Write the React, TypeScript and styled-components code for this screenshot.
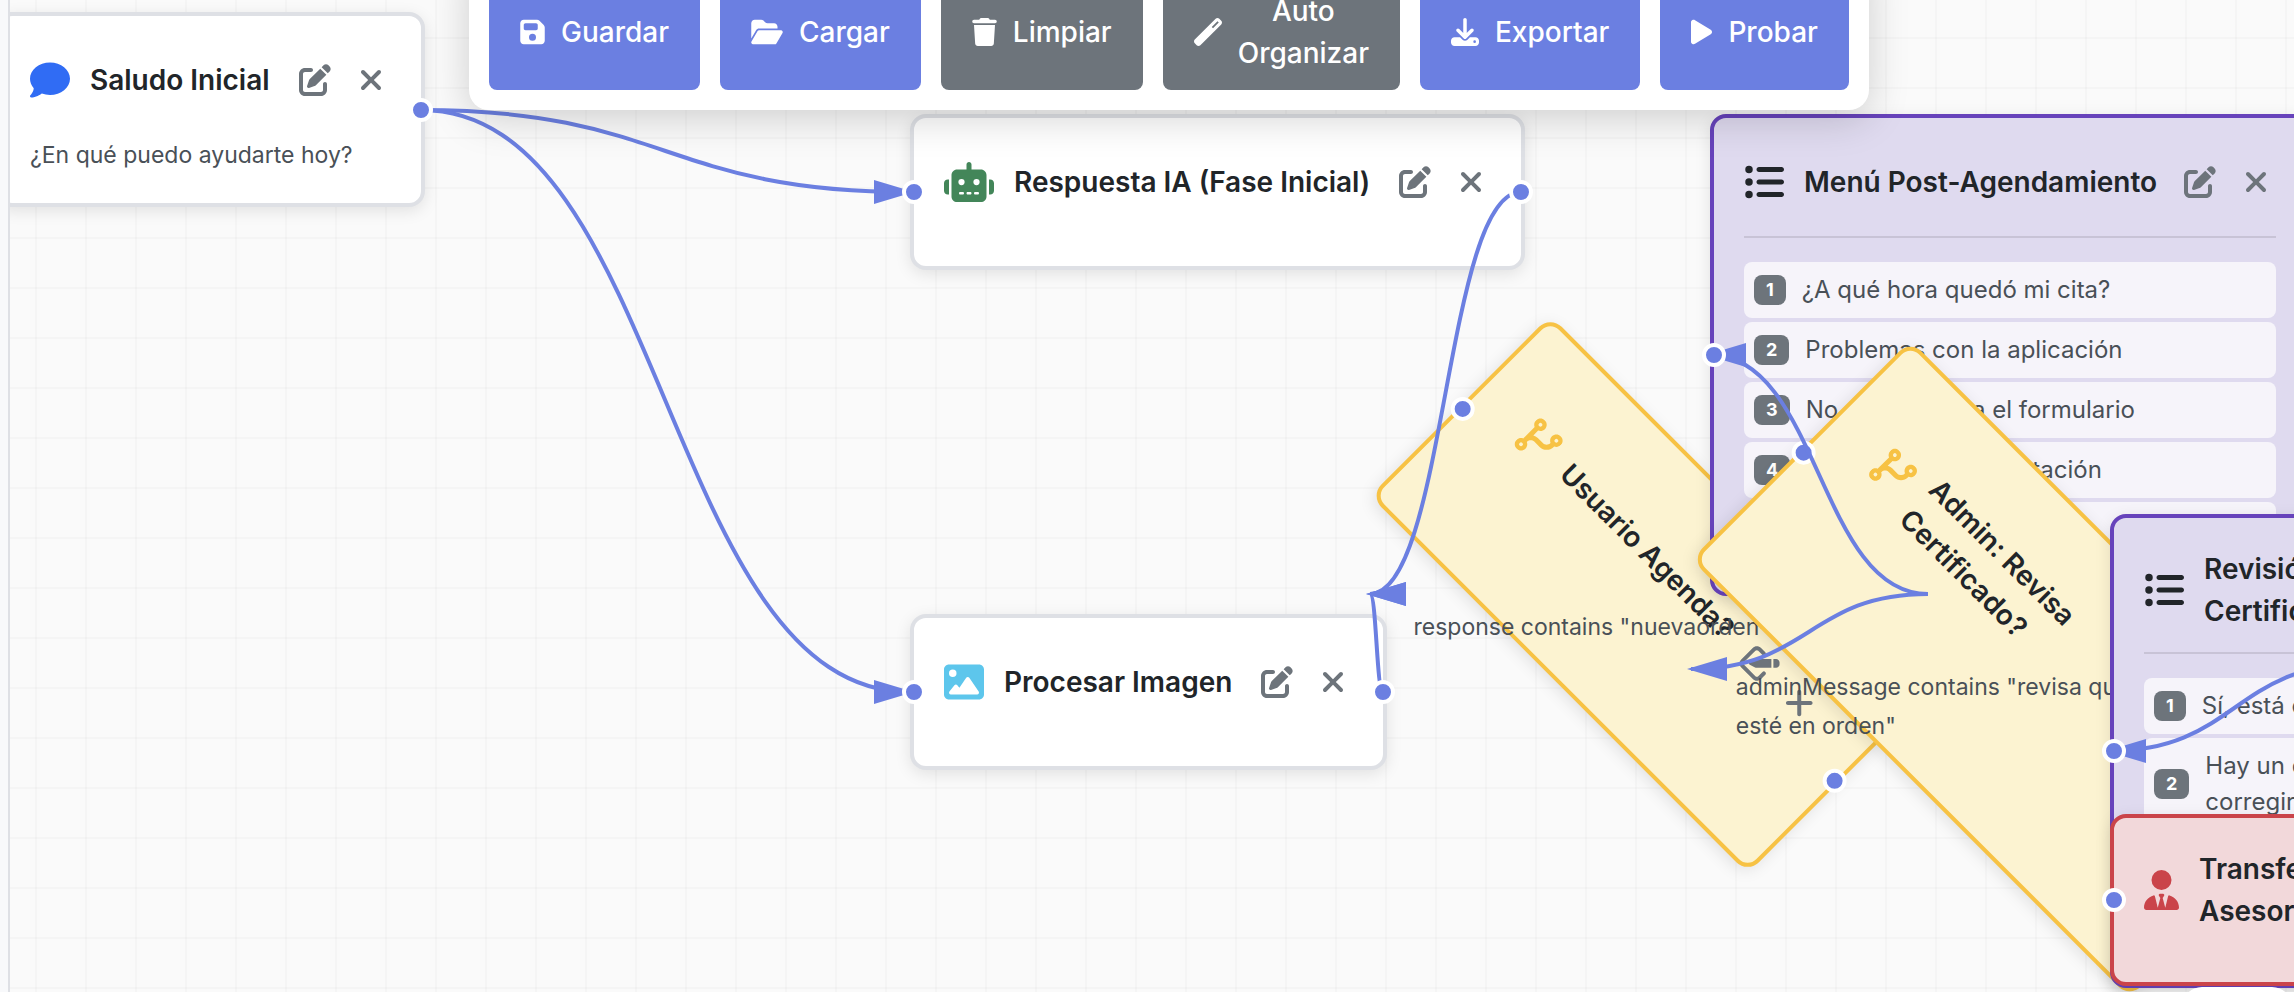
import React from "react";
import styled, { createGlobalStyle, css } from "styled-components";
import type { IconType } from "react-icons";
import {
  FaCodeBranch,
  FaComment,
  FaDownload,
  FaFloppyDisk,
  FaFolderOpen,
  FaImage,
  FaListUl,
  FaPenToSquare,
  FaPlay,
  FaRobot,
  FaTrash,
  FaUserTie,
  FaWandMagic,
  FaXmark,
} from "react-icons/fa6";

const color = {
  accent: "#6b7fe1",
  gray: "#6d747b",
  ink: "#212529",
  soft: "#495057",
  line: "#dee0e5",
};

type Kind = "plain" | "menu" | "condition" | "transfer";

const palette: Record<Kind, { border: string; fill: string }> = {
  plain: { border: color.line, fill: "#ffffff" },
  menu: { border: "#6743bb", fill: "#dfdaef" },
  condition: { border: "#f7c244", fill: "#fcf3d1" },
  transfer: { border: "#ca444a", fill: "#f2d8da" },
};

const GlobalStyle = createGlobalStyle`
  *, *::before, *::after { box-sizing: border-box; }
  body {
    margin: 0;
    overflow: hidden;
    font-family: Inter, "Liberation Sans", sans-serif;
    color: ${color.ink};
    background: #fafafa;
  }
  button { font: inherit; cursor: pointer; }
`;

const Page = styled.div`
  display: flex;
  height: 100vh;
`;

const SideEdge = styled.aside`
  flex: 0 0 10px;
  background: #f8f9fb;
  border-right: 2px solid ${color.line};
`;

const Canvas = styled.main`
  position: relative;
  flex: 1;
  min-width: 0;
  overflow: hidden;
  background-color: #fafafa;
  background-image: linear-gradient(rgba(0, 0, 0, 0.02) 2px, transparent 2px),
    linear-gradient(90deg, rgba(0, 0, 0, 0.02) 2px, transparent 2px);
  background-size: 50px 50px;
  background-position: 25px 37px;
`;

const Toolbar = styled.div`
  position: absolute;
  z-index: 20;
  left: 459px;
  top: -46px;
  display: flex;
  gap: 20px;
  padding: 20px;
  border-radius: 20px;
  background: #ffffff;
  box-shadow: 0 8px 40px rgba(0, 0, 0, 0.18);
`;

/* Icons keep their own proportions, so each one names its width. */
const Glyph = styled.span<{ $width: number; $height: number; $tint?: string }>`
  display: flex;
  flex: none;
  width: ${(p) => p.$width}px;
  height: ${(p) => p.$height}px;
  color: ${(p) => p.$tint ?? "inherit"};

  svg {
    width: 100%;
    height: 100%;
  }
`;

const ToolButton = styled.button<{ $muted?: boolean }>`
  display: flex;
  align-items: center;
  gap: 16px;
  height: 116px;
  padding: 16px 31px;
  border: 0;
  border-radius: 8px;
  background: ${(p) => (p.$muted ? color.gray : color.accent)};
  color: #ffffff;
  font-size: 28px;
  font-weight: 500;
  line-height: 42px;
  text-align: center;
`;

const NodeBox = styled.article<{ $kind: Kind; $x: number; $y: number; $width: number }>`
  position: absolute;
  left: ${(p) => p.$x}px;
  top: ${(p) => p.$y}px;
  width: ${(p) => p.$width}px;
  padding: 30px;
  border: 4px solid ${(p) => palette[p.$kind].border};
  border-radius: 16px;
  background: ${(p) => palette[p.$kind].fill};
  box-shadow: 0 4px 16px rgba(0, 0, 0, 0.1);
  ${(p) =>
    p.$kind === "condition" &&
    css`
      padding: 60px;
      transform: rotate(45deg);
    `}
`;

const NodeHeader = styled.header`
  display: flex;
  align-items: center;
  gap: 20px;
  min-height: 68px;
  margin-bottom: 20px;
`;

const NodeTitle = styled.h3<{ $wrap?: boolean }>`
  flex: 1;
  min-width: 0;
  margin: 0;
  font-size: 28px;
  font-weight: 600;
  line-height: 42px;
  white-space: ${(p) => (p.$wrap ? "pre-line" : "nowrap")};
`;

const NodeActions = styled.div`
  display: flex;
  flex: none;
  gap: 12px;
`;

const IconButton = styled.button`
  display: flex;
  align-items: center;
  height: 68px;
  padding: 0 8px;
  border: 0;
  background: transparent;
  color: ${color.gray};
`;

const NodeText = styled.p<{ $upright?: boolean }>`
  margin: 22px 0 -2px;
  color: ${color.soft};
  font-size: 23px;
  line-height: 39px;
  ${(p) => p.$upright && "transform: rotate(-45deg);"}
`;

const OptionList = styled.ol`
  display: flex;
  flex-direction: column;
  gap: 4px;
  margin: 0 0 4px;
  padding: 24px 0 0;
  border-top: 2px solid rgba(0, 0, 0, 0.1);
  list-style: none;
`;

const Option = styled.li`
  display: flex;
  align-items: center;
  gap: 16px;
  padding: 10px;
  border-radius: 8px;
  background: rgba(255, 255, 255, 0.7);
  color: ${color.soft};
  font-size: 24px;
  line-height: 36px;
  white-space: pre-line;
`;

const OptionNumber = styled.span`
  flex: none;
  padding: 6px 12px;
  border-radius: 8px;
  background: ${color.gray};
  color: #ffffff;
  font-size: 18px;
  font-weight: 700;
  line-height: 18px;
`;

const Port = styled.span<{ $side: "left" | "right"; $flat?: boolean }>`
  position: absolute;
  z-index: ${(p) => (p.$flat ? 1 : 10)};
  top: calc(50% - 12px);
  ${(p) => p.$side}: -12px;
  width: 24px;
  height: 24px;
  border: 4px solid #ffffff;
  border-radius: 50%;
  background: ${color.accent};
`;

const Edges = styled.svg`
  position: absolute;
  z-index: 5;
  inset: 0;
  width: 100%;
  height: 100%;
  overflow: visible;
  pointer-events: none;
`;

const FloatingPanel = styled.div`
  position: absolute;
  z-index: 20;
  right: 2px;
  bottom: -91px;
  width: 110px;
  height: 96px;
  border-radius: 20px;
  background: #ffffff;
`;

interface FlowNode {
  kind: Kind;
  x: number;
  y: number;
  width: number;
  icon: IconType;
  iconWidth: number;
  tint: string;
  title: string;
  wrap?: boolean;
  text?: string;
  options?: string[];
  ports: ("left" | "right")[];
}

const nodes: FlowNode[] = [
  {
    kind: "plain",
    x: -14,
    y: 12,
    width: 429,
    icon: FaComment,
    iconWidth: 40,
    tint: "#306cf4",
    title: "Saludo Inicial",
    text: "¿En qué puedo ayudarte hoy?",
    ports: ["right"],
  },
  {
    kind: "plain",
    x: 900,
    y: 114,
    width: 615,
    icon: FaRobot,
    iconWidth: 50,
    tint: "#438659",
    title: "Respuesta IA (Fase Inicial)",
    ports: ["left", "right"],
  },
  {
    kind: "plain",
    x: 900,
    y: 614,
    width: 477,
    icon: FaImage,
    iconWidth: 40,
    tint: "#5dc6ec",
    title: "Procesar Imagen",
    ports: ["left", "right"],
  },
  {
    kind: "condition",
    x: 1372,
    y: 467,
    width: 534,
    icon: FaCodeBranch,
    iconWidth: 35,
    tint: "#f7c244",
    title: "Usuario Agenda?",
    text: 'response contains "nuevaorden-"',
    ports: ["left", "right"],
  },
  {
    kind: "menu",
    x: 1700,
    y: 114,
    width: 600,
    icon: FaListUl,
    iconWidth: 40,
    tint: color.ink,
    title: "Menú Post-Agendamiento",
    options: [
      "¿A qué hora quedó mi cita?",
      "Problemas con la aplicación",
      "No me funciona el formulario",
      "Actualizar documentación",
      "Otra consulta",
    ],
    ports: ["left", "right"],
  },
  {
    kind: "condition",
    x: 1700,
    y: 514,
    width: 620,
    icon: FaCodeBranch,
    iconWidth: 35,
    tint: "#f7c244",
    title: "Admin: Revisa Certificado?",
    wrap: true,
    text: 'adminMessage contains "revisa que todo esté en orden"',
    ports: ["left", "right"],
  },
  {
    kind: "menu",
    x: 2100,
    y: 514,
    width: 600,
    icon: FaListUl,
    iconWidth: 40,
    tint: color.ink,
    title: "Revisión de\nCertificado",
    wrap: true,
    options: [
      "Sí, está correcto",
      "Hay un error y es necesario\ncorregirlo",
      "No lo he recibido",
      "Otra consulta",
    ],
    ports: ["left", "right"],
  },
  {
    kind: "transfer",
    x: 2100,
    y: 814,
    width: 500,
    icon: FaUserTie,
    iconWidth: 35,
    tint: "#ca444a",
    title: "Transferir a\nAsesor",
    wrap: true,
    ports: ["left"],
  },
];

const edges: [number, number, number, number][] = [
  [411, 110, 900, 192],
  [411, 110, 900, 692],
  [1511, 192, 1360, 594],
  [1373, 692, 1360, 594],
  [1918, 594, 1700, 355],
  [1918, 594, 1681, 669],
  [2350, 664, 2100, 751],
];

const curve = ([x1, y1, x2, y2]: [number, number, number, number]) => {
  const mid = (x1 + x2) / 2;
  return `M${x1} ${y1} C${mid} ${y1} ${mid} ${y2} ${x2} ${y2}`;
};

interface Tool {
  icon: IconType;
  iconWidth: number;
  label: React.ReactNode;
  muted?: boolean;
}

const tools: Tool[] = [
  { icon: FaFloppyDisk, iconWidth: 25, label: "Guardar" },
  { icon: FaFolderOpen, iconWidth: 32, label: "Cargar" },
  { icon: FaTrash, iconWidth: 25, label: "Limpiar", muted: true },
  {
    icon: FaWandMagic,
    iconWidth: 28,
    label: (
      <>
        Auto
        <br />
        Organizar
      </>
    ),
    muted: true,
  },
  { icon: FaDownload, iconWidth: 28, label: "Exportar" },
  { icon: FaPlay, iconWidth: 21, label: "Probar" },
];

function FlowNodeCard({ node }: { node: FlowNode }) {
  const Icon = node.icon;
  const tilted = node.kind === "condition";
  return (
    <NodeBox $kind={node.kind} $x={node.x} $y={node.y} $width={node.width}>
      <NodeHeader>
        <Glyph $width={node.iconWidth} $height={40} $tint={node.tint}>
          <Icon />
        </Glyph>
        <NodeTitle $wrap={node.wrap}>{node.title}</NodeTitle>
        <NodeActions>
          <IconButton type="button" aria-label="Editar">
            <Glyph $width={32} $height={32}>
              <FaPenToSquare />
            </Glyph>
          </IconButton>
          <IconButton type="button" aria-label="Eliminar">
            <Glyph $width={24} $height={32}>
              <FaXmark />
            </Glyph>
          </IconButton>
        </NodeActions>
      </NodeHeader>
      {node.text && <NodeText $upright={tilted}>{node.text}</NodeText>}
      {node.options && (
        <OptionList>
          {node.options.map((option, i) => (
            <Option key={option}>
              <OptionNumber>{i + 1}</OptionNumber>
              <span>{option}</span>
            </Option>
          ))}
        </OptionList>
      )}
      {node.ports.map((side) => (
        <Port key={side} $side={side} $flat={tilted} />
      ))}
    </NodeBox>
  );
}

export default function App() {
  return (
    <Page>
      <GlobalStyle />
      <SideEdge />
      <Canvas>
        {nodes.map((node) => (
          <FlowNodeCard key={node.title} node={node} />
        ))}
        <Edges aria-hidden="true">
          <defs>
            <marker
              id="arrow"
              markerUnits="userSpaceOnUse"
              markerWidth="40"
              markerHeight="24"
              refX="36"
              refY="12"
              orient="auto"
            >
              <path d="M0 0 L40 12 L0 24 Z" fill={color.accent} />
            </marker>
          </defs>
          {edges.map((edge) => (
            <path
              key={edge.join()}
              d={curve(edge)}
              fill="none"
              stroke={color.accent}
              strokeWidth="4"
              markerEnd="url(#arrow)"
            />
          ))}
        </Edges>
        <Toolbar role="toolbar" aria-label="Acciones del flujo">
          {tools.map(({ icon: Icon, iconWidth, label, muted }, i) => (
            <ToolButton key={i} type="button" $muted={muted}>
              <Glyph $width={iconWidth} $height={28}>
                <Icon />
              </Glyph>
              <span>{label}</span>
            </ToolButton>
          ))}
        </Toolbar>
        <FloatingPanel />
      </Canvas>
    </Page>
  );
}
